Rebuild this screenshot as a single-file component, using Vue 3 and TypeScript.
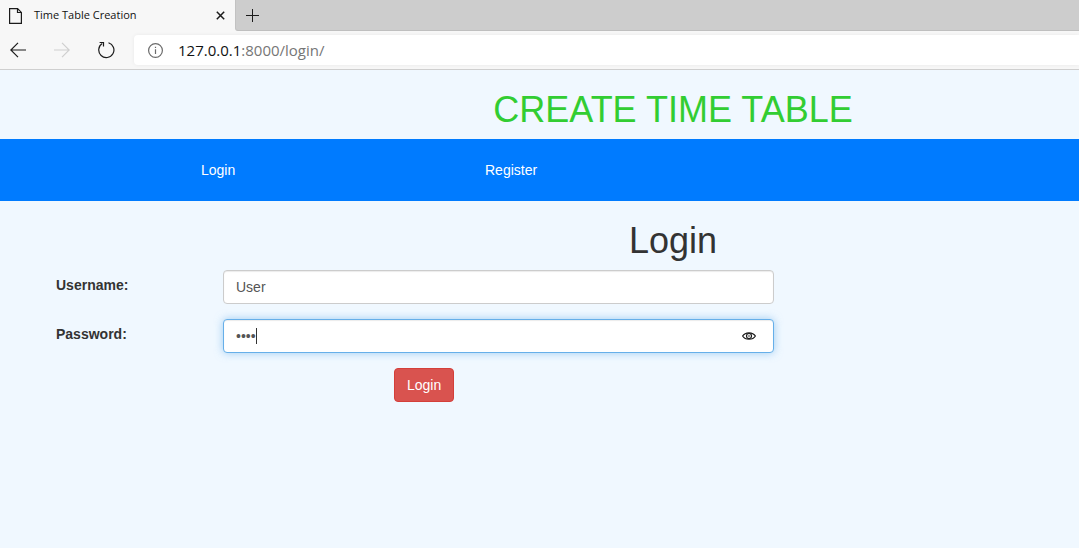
<script setup lang="ts">
import { ref } from 'vue'

const username = ref('User')
const password = ref('pass')
const address = { host: '127.0.0.1', rest: ':8000/login/' }
const links = [
  { label: 'Login', href: '#login' },
  { label: 'Register', href: '#register' },
]
</script>

<template>
  <div class="browser">
    <div class="tabs">
      <div class="tab">
        <svg class="doc" width="13" height="16" viewBox="0 0 13 16" aria-hidden="true">
          <path d="M.6.6H8.6L12.4 4.4V15.4H.6ZM8.5.6V4.5H12.4" />
        </svg>
        <span class="tab-title">Time Table Creation</span>
        <button class="icon-button close" type="button" aria-label="Close tab">
          <svg width="9" height="9" viewBox="0 0 9 9"><path d="M.8.8L8.2 8.2M8.2.8L.8 8.2" /></svg>
        </button>
      </div>
      <div class="strip">
        <button class="icon-button new-tab" type="button" aria-label="New tab">
          <svg width="13" height="13" viewBox="0 0 13 13"><path d="M6.5 0V13M0 6.5H13" /></svg>
        </button>
      </div>
    </div>
    <div class="toolbar">
      <button class="icon-button" type="button" aria-label="Back">
        <svg width="16" height="16" viewBox="0 0 16 16"><path d="M16 8H.8M8 .8L.8 8L8 15.2" /></svg>
      </button>
      <button class="icon-button forward" type="button" aria-label="Forward">
        <svg width="16" height="16" viewBox="0 0 16 16"><path d="M0 8H15.2M8 .8L15.2 8L8 15.2" /></svg>
      </button>
      <button class="icon-button reload" type="button" aria-label="Refresh">
        <svg width="18" height="18" viewBox="0 0 18 18">
          <path d="M11.5 1.7A7.6 7.6 0 1 1 5.2 2.6M2.6 1.5H6.5V5.4" />
        </svg>
      </button>
      <div class="address">
        <svg class="info" width="15" height="15" viewBox="0 0 15 15" aria-hidden="true">
          <circle cx="7.5" cy="7.5" r="6.9" />
          <path d="M7.5 6.2V11M7.5 3.8V5" />
        </svg>
        <span class="url"><span class="host">{{ address.host }}</span>{{ address.rest }}</span>
      </div>
    </div>
  </div>

  <main>
    <h1 class="brand">CREATE TIME TABLE</h1>
    <nav>
      <a v-for="link in links" :key="link.label" :href="link.href">{{ link.label }}</a>
    </nav>
    <h1>Login</h1>
    <form @submit.prevent>
      <div class="row">
        <label for="username">Username:</label>
        <div class="field">
          <input id="username" v-model="username" type="text" />
        </div>
      </div>
      <div class="row">
        <label for="password">Password:</label>
        <div class="field">
          <input id="password" v-model="password" class="active" type="password" />
          <span class="caret" aria-hidden="true"></span>
          <button class="icon-button reveal" type="button" aria-label="Show password">
            <svg width="14" height="8" viewBox="0 0 14 8">
              <path d="M.6 4C3.2-.3 10.8-.3 13.4 4C10.8 8.3 3.2 8.3.6 4Z" />
              <circle cx="7" cy="4" r="2.5" />
              <circle class="pupil" cx="7" cy="4" r=".8" />
            </svg>
          </button>
        </div>
      </div>
      <button class="submit" type="submit">Login</button>
    </form>
  </main>
</template>

<style>
body {
  margin: 0;
  background: #f0f8ff;
  overflow-x: hidden;
}
</style>

<style scoped>
* {
  box-sizing: border-box;
}
.browser {
  font-family: "Open Sans", "Noto Sans", sans-serif;
  background: #f7f7f7;
  border-bottom: 1px solid #cfcfcf;
}
.tabs {
  display: flex;
  height: 31px;
}
.tab {
  display: flex;
  align-items: center;
  width: 235px;
  height: 31px;
  padding: 0 10px 0 9px;
}
.tab-title {
  flex: 1;
  margin-left: 12px;
  padding-bottom: 2px;
  font-size: 11px;
  line-height: 16px;
  color: #111;
}
.strip {
  display: flex;
  flex: 1;
  align-items: center;
  background: #cdcdcd;
  border-bottom: 1px solid #bfbfbf;
  border-left: 1px solid #c2c2c2;
  border-bottom-left-radius: 3px;
}
svg {
  display: block;
  fill: none;
  stroke: #1b1b1b;
  stroke-width: 1.2;
}
.icon-button {
  padding: 0;
  border: 0;
  background: none;
}
.close svg {
  stroke-width: 1.5;
}
.new-tab {
  margin-left: 10px;
}
.new-tab svg {
  stroke-width: 1;
}
.toolbar {
  display: flex;
  align-items: center;
  height: 38px;
  padding-left: 10px;
}
.forward {
  margin-left: 28px;
}
.forward svg {
  stroke: #cfcfcf;
}
.reload {
  margin-left: 27px;
}
.address {
  display: flex;
  flex: 1;
  align-items: center;
  height: 30px;
  margin-left: 19px;
  padding-left: 14px;
  background: #fff;
  border-radius: 4px 0 0 4px;
  box-shadow: 0 0 4px rgba(0, 0, 0, 0.06);
}
.info {
  stroke: #6b6b6b;
}
.url {
  margin-left: 15px;
  font-size: 15px;
  line-height: 20px;
  color: #767676;
}
.host {
  color: #111;
}
main {
  font-family: "Liberation Sans", Arial, sans-serif;
  font-size: 14px;
  line-height: 20px;
  color: #333;
}
h1 {
  margin: 0;
  padding: 20px 0 9px 267px;
  font-size: 36px;
  font-weight: 400;
  line-height: 40px;
  text-align: center;
}
.brand {
  color: #32cd32;
}
nav {
  display: flex;
  padding: 21px 0 21px 201px;
  background: #007bff;
}
nav a {
  width: 284px;
  color: #fff;
  text-decoration: none;
}
.row {
  display: flex;
  margin-bottom: 15px;
}
label {
  width: 223px;
  padding: 5px 0 0 56px;
  font-weight: 700;
}
.field {
  position: relative;
  width: 551px;
}
input {
  display: block;
  width: 100%;
  height: 34px;
  padding: 6px 12px;
  border: 1px solid #ccc;
  border-radius: 4px;
  outline: 0;
  background: #fff;
  box-shadow: inset 0 1px 1px rgba(0, 0, 0, 0.08);
  color: #555;
  font: inherit;
}
.active {
  border-color: #66afe9;
  box-shadow: inset 0 1px 1px rgba(0, 0, 0, 0.08), 0 0 8px rgba(102, 175, 233, 0.6);
}
.caret {
  position: absolute;
  left: 33px;
  top: 9px;
  width: 1px;
  height: 16px;
  background: #333;
}
.reveal {
  position: absolute;
  right: 18px;
  top: 13px;
}
.reveal .pupil {
  fill: #1b1b1b;
  stroke: none;
}
.submit {
  display: block;
  margin-left: 394px;
  padding: 6px 12px;
  border: 1px solid #d43f3a;
  border-radius: 4px;
  background: #d9534f;
  color: #fff;
  font: inherit;
}
</style>
